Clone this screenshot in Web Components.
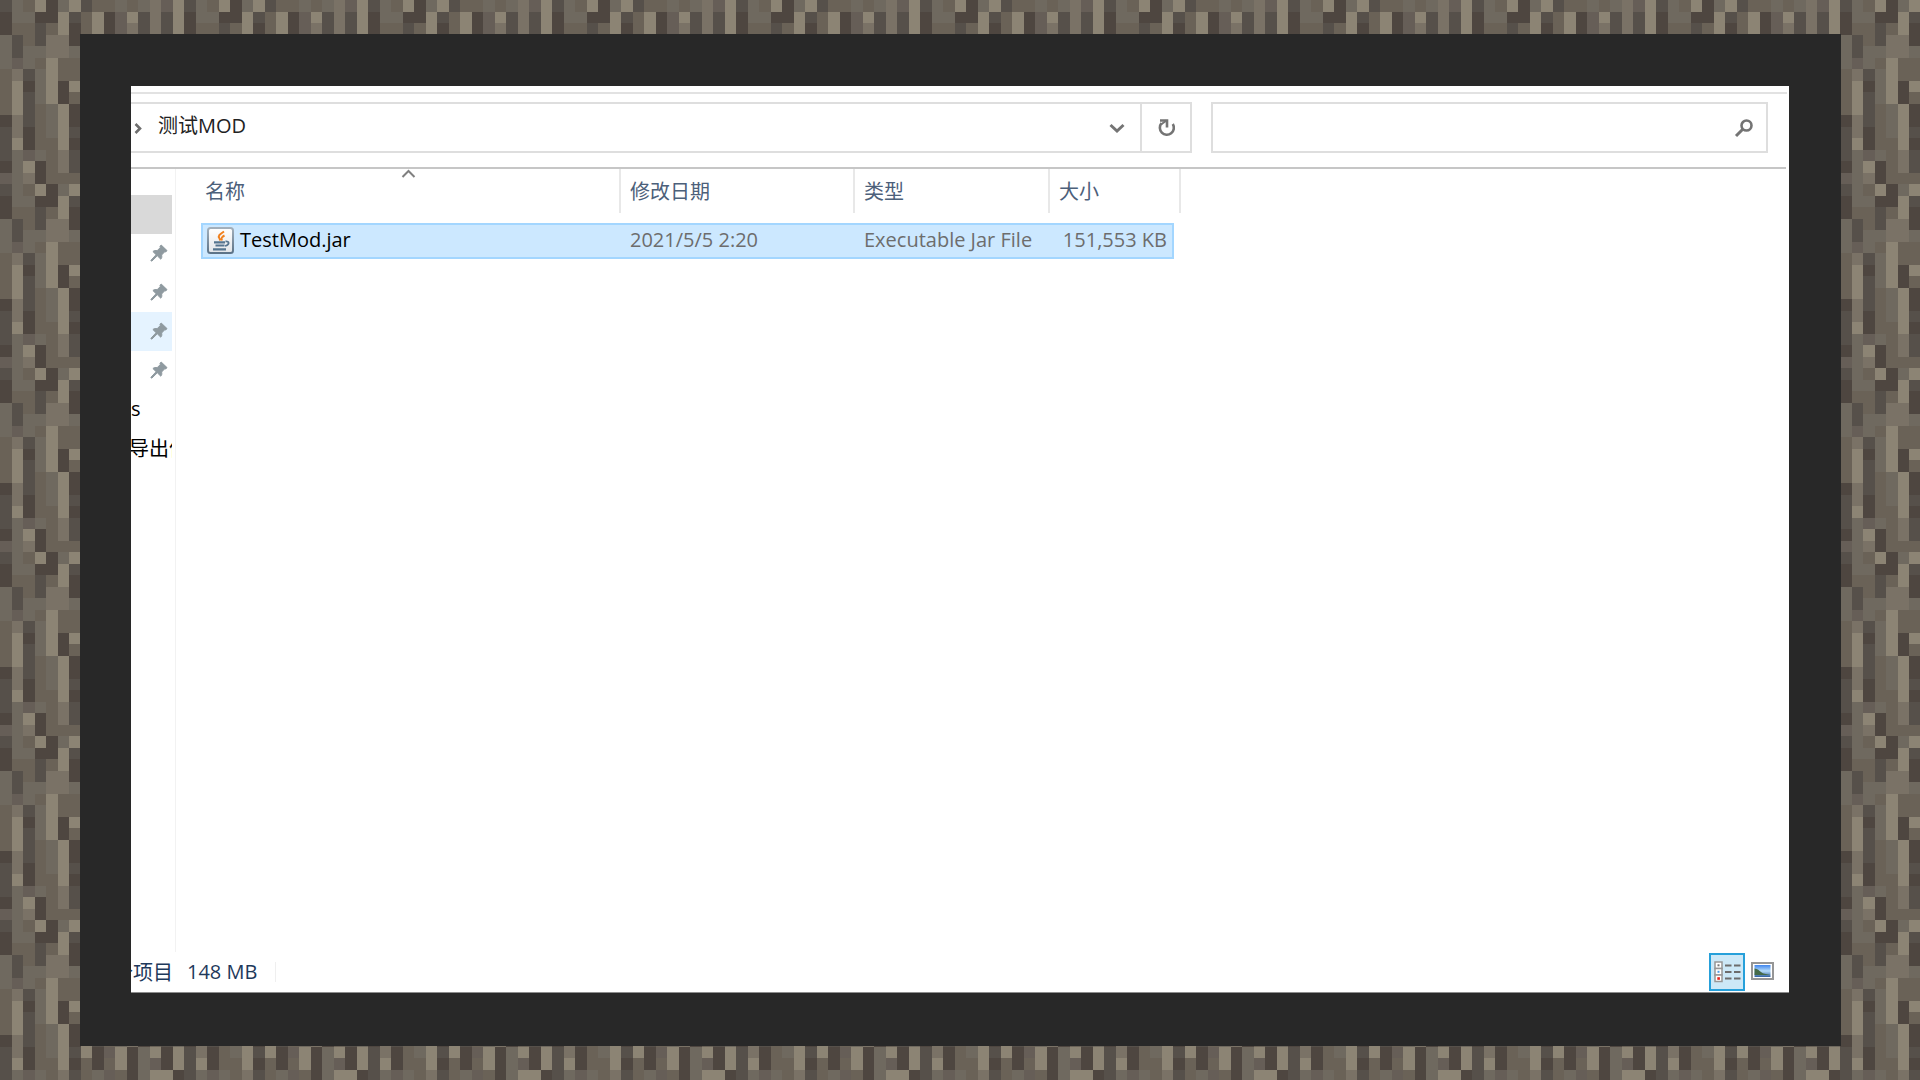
<!DOCTYPE html>
<html lang="zh-CN">
<head>
<meta charset="utf-8">
<title>测试MOD</title>
<style>
  html, body { margin: 0; height: 100%; }
  body { font-family: "Open Sans", "Noto Sans CJK SC", sans-serif; font-size: 20px; color: #111; background: #6b6357; }
</style>
</head>
<body>
<bark-backdrop>
  <explorer-window>
    <address-bar slot="bar" folder="测试MOD"></address-bar>
    <quick-access slot="side"></quick-access>
    <file-table slot="main"></file-table>
    <status-bar slot="status"></status-bar>
  </explorer-window>
</bark-backdrop>

<script>
const define = (name, html, setup) => {
  const tpl = document.createElement('template');
  tpl.innerHTML = '<style>*{box-sizing:border-box}button{font:inherit;color:inherit;background:none;border:0;padding:0;margin:0;text-align:left}svg{display:block;flex:none}</style>' + html;
  customElements.define(name, class extends HTMLElement {
    constructor() {
      super();
      this.attachShadow({ mode: 'open' }).append(tpl.content.cloneNode(true));
    }
    connectedCallback() { if (setup) setup(this, this.shadowRoot); }
  });
};

/* 16 x 16 texel bark tile, one letter for each shade */
const SHADES = { D: '#4e4640', E: '#56504a', G: '#665e57', M: '#6a6257', N: '#6f695f', L: '#7a7266', B: '#8c8474' };
const BARK = [
  'ENMBDNBEMMNMNLGB',
  'DNNDDBEMBDGBELEB',
  'DMMEMBDMBDGLELEB',
  'NEMELLDMNLDMNEMB',
  'NENNLLNMNLEMGDNL',
  'NGNMBMMNDMBELMDN',
  'MLENBMMLENMDNBMG',
  'MBDNBDBMDBNEMLDM',
  'MBENBDMNDBMDNMEL',
  'MBEMNBDLENMBDMNE',
  'DLEMNBDBEMNLDMEN',
  'ELDMNBEBDGBDNBDB',
  'EBDMMBDMDMBDNGDB',
  'ENGNMLEMNGMDNBBD',
  'DNBDMLENMBLENMLD',
  'GNLDMMMBEMNDGLEM'
];
define('bark-backdrop', `
<style>
  :host { display: block; min-height: 100vh; position: relative; }
  .bark { position: absolute; inset: 0; width: 100%; height: 100%; }
  .frame { position: relative; display: flex; min-height: 100vh; padding: 34px 79px 34px 80px; box-sizing: border-box; }
  .mat { flex: 1; display: flex; background: #282828; padding: 52px 52px 53px 51px; }
</style>
<svg class="bark" aria-hidden="true">
  <defs><pattern id="p" width="184" height="184" patternUnits="userSpaceOnUse" viewBox="0 0 16 16"></pattern></defs>
  <rect width="100%" height="100%" fill="url(#p)"/>
</svg>
<div class="frame"><div class="mat"><slot></slot></div></div>`,
(host, root) => {
  const p = root.querySelector('pattern');
  BARK.forEach((row, y) => [...row].forEach((c, x) => {
    const r = document.createElementNS('http://www.w3.org/2000/svg', 'rect');
    Object.entries({ x, y, width: 1, height: 1, fill: SHADES[c], 'shape-rendering': 'crispEdges' }).forEach(([k, v]) => r.setAttribute(k, v));
    p.append(r);
  }));
});

define('explorer-window', `
<style>
  :host { flex: 1; min-width: 0; display: flex; flex-direction: column; background: #fff; overflow: hidden; border-bottom: 1px solid #8c8c8c; }
  .ribbon { height: 8px; margin-right: 2px; border-bottom: 2px solid #e2e2e2; }
  .top { padding: 8px 0 14px; margin-right: 3px; border-bottom: 2px solid #c6c6c6; }
  .body { flex: 1; display: flex; min-height: 0; }
</style>
<div class="ribbon"></div>
<div class="top"><slot name="bar"></slot></div>
<div class="body"><slot name="side"></slot><slot name="main"></slot></div>
<slot name="status"></slot>`);

define('address-bar', `
<style>
  :host { display: flex; gap: 19px; height: 51px; padding-right: 18px; color: #222; }
  .path { width: 1061px; display: flex; align-items: center; border: 2px solid #dedede; border-left: 0; }
  .crumb { flex: 1; display: flex; align-items: center; gap: 15px; padding-left: 2px; line-height: 28px; }
  .crumb button { margin-bottom: 4px; }
  .drop { width: 46px; height: 100%; display: grid; place-items: center; }
  .refresh { width: 50px; height: 100%; display: grid; place-items: center; border-left: 2px solid #dedede; }
  .search { flex: 1; display: flex; align-items: center; border: 2px solid #dedede; padding-right: 12px; }
  input { flex: 1; min-width: 0; height: 100%; border: 0; padding: 0 10px; font: inherit; background: none; outline: 0; }
</style>
<nav class="path" aria-label="地址">
  <div class="crumb">
    <svg width="10" height="14" viewBox="0 0 10 14"><path d="M2.5 3l4.500 4.500-4.500 4.500" fill="none" stroke="#6e6e6e" stroke-width="2.600"/></svg>
    <button class="name"></button>
  </div>
  <button class="drop" aria-label="展开"><svg width="16" height="12" viewBox="0 0 16 12"><path d="M1.500 3l6.500 6 6.500-6" fill="none" stroke="#747474" stroke-width="3"/></svg></button>
  <button class="refresh" aria-label="刷新"><svg width="20" height="20" viewBox="0 0 20 20"><path d="M5.500 5.200A7 7 0 1 0 16.800 6" fill="none" stroke="#747474" stroke-width="2.600"/><path d="M4 2.500h7v7" fill="none" stroke="#747474" stroke-width="2.600"/><path d="M5 6.500l5.500-4" stroke="#747474" stroke-width="2"/></svg></button>
</nav>
<div class="search">
  <input type="text" aria-label="搜索">
  <button aria-label="开始搜索"><svg width="20" height="20" viewBox="0 0 20 20"><circle cx="12.500" cy="7.500" r="5" fill="none" stroke="#747474" stroke-width="2.600"/><path d="M9 11l-7 7" stroke="#747474" stroke-width="3"/></svg></button>
</div>`,
(host, root) => { root.querySelector('.name').textContent = host.getAttribute('folder'); });

define('pin-icon', `
<style>:host { display: block; }</style>
<svg width="18" height="18" viewBox="0 0 18 18"><path fill="#8f9aa0" stroke="#8f9aa0" stroke-width="1" d="M11.200 1L17 6.600 15.700 8l-1-.2-3.100 3.200c.5 1.800.2 3.200-.8 4.200L7.300 11.800 2 17 1 17 1 16.200 6.100 10.700 2.900 7.500c1.200-1 2.600-1.200 4.200-.8l3.200-3.100-.3-1.300z"/></svg>`);

define('quick-access', `
<style>
  :host { display: block; width: 44px; flex: none; border-right: 1px solid #f2f2f2; }
  ul { list-style: none; margin: 0; padding: 26px 3px 0 0; }
  li { height: 39px; display: flex; align-items: center; justify-content: flex-end; padding: 0 4px 2px 0; overflow: hidden; white-space: nowrap; }
  li.sel { background: #d9d9d9; }
  li.hover { background: #e5f3ff; }
  li.text { justify-content: flex-start; padding-right: 0; color: #000; }
  li.cjk { text-indent: -2px; }
</style>
<ul>
  <li class="sel"></li>
  <li><pin-icon></pin-icon></li>
  <li><pin-icon></pin-icon></li>
  <li class="hover"><pin-icon></pin-icon></li>
  <li><pin-icon></pin-icon></li>
  <li class="text">s</li>
  <li class="text cjk">导出件</li>
</ul>`);

define('jar-icon', `
<style>:host { display: block; flex: none; }</style>
<svg width="27" height="27" viewBox="0 0 27 27">
  <defs><linearGradient id="g" x1="0" y1="0" x2="0" y2="1"><stop offset="0" stop-color="#a3b0bc"/><stop offset="1" stop-color="#5c7388"/></linearGradient>
  <linearGradient id="f" x1="0" y1="0" x2="0" y2="1"><stop offset="0" stop-color="#fff"/><stop offset="1" stop-color="#e2e5e8"/></linearGradient></defs>
  <rect x="1" y="1" width="25" height="25" rx="2.500" fill="url(#f)" stroke="url(#g)" stroke-width="2"/>
  <path d="M17 4.500c-4.500 3-6.500 4.500-4.500 7l1 2M17.500 8.500c-3 1.500-3.500 2.500-2.500 5" fill="none" stroke="#f0801e" stroke-width="2"/>
  <path d="M7 15.300h11M8.500 18.500h9M6 22.300h13" stroke="#56758f" stroke-width="2.200" fill="none"/>
  <path d="M18.500 14.500c4-.5 4.500 3-.5 4.500" fill="none" stroke="#56758f" stroke-width="1.800"/>
</svg>`);

define('file-table', `
<style>
  :host { flex: 1; min-width: 0; display: block; padding-left: 25px; }
  table { display: block; width: 980px; }
  thead, tbody { display: block; }
  tr { display: grid; grid-template-columns: 420px 234px 195px 1fr; align-items: center; }
  th { height: 44px; display: flex; align-items: center; position: relative; padding: 0 0 2px 9px; font-weight: 400; color: #4c607a; border-right: 2px solid #e8e8e8; }
  th:first-child { padding-left: 4px; }
  th svg { position: absolute; left: 200px; top: 0; }
  tbody { padding: 10px 7px 0 0; }
  tbody tr { height: 36px; background: #cce8ff; box-shadow: inset 0 0 0 2px #a3d6ff; color: #6d6d6d; }
  td { padding: 0 0 2px 9px; line-height: 28px; white-space: nowrap; }
  td:first-child { display: flex; align-items: center; gap: 6px; padding-left: 6px; color: #000; }
  td:last-child { text-align: right; padding: 0 7px 2px 0; }
</style>
<table>
  <thead><tr>
    <th><button>名称</button><svg width="15" height="9" viewBox="0 0 15 9"><path d="M1.500 8l6-6 6 6" fill="none" stroke="#808080" stroke-width="2"/></svg></th>
    <th><button>修改日期</button></th><th><button>类型</button></th><th><button>大小</button></th>
  </tr></thead>
  <tbody><tr>
    <td><jar-icon></jar-icon><span>TestMod.jar</span></td>
    <td>2021/5/5 2:20</td><td>Executable Jar File</td><td>151,553 KB</td>
  </tr></tbody>
</table>`);

define('status-bar', `
<style>
  :host { display: flex; align-items: center; height: 40px; padding-right: 15px; color: #1e395b; white-space: nowrap; }
  .count { width: 42px; display: flex; justify-content: flex-end; overflow: hidden; padding-bottom: 2px; }
  .size { padding: 0 18px 0 14px; line-height: 20px; border-right: 1px solid #efefef; }
  .views { margin-left: auto; display: flex; gap: 6px; }
  .views button { height: 38px; display: grid; place-items: center; }
  .views .on { width: 36px; background: #cce8f7; border: 2px solid #26a0da; }
  .views .thumb { padding-bottom: 2px; }
</style>
<span class="count">个项目</span><span class="size">148 MB</span>
<div class="views">
  <button class="on" aria-label="详细信息"><svg width="28" height="22" viewBox="0 0 28 22">
    <g fill="#fff" stroke="#969696" stroke-width="1.500"><rect x="2" y="1" width="7" height="6.500"/><rect x="2" y="7.500" width="7" height="6.500"/><rect x="2" y="14" width="7" height="6.500"/></g>
    <path d="M12 4.500h6.500M21 4.500h6.500M12 11h6.500M21 11h6.500M12 17.500h6.500M21 17.500h6.500" stroke="#6c6c6c" stroke-width="2.200"/>
    <rect x="4.500" y="3.300" width="2" height="2" fill="#777"/><rect x="4.500" y="9.800" width="2" height="2" fill="#4c9be8"/><rect x="4.300" y="16.200" width="2.600" height="2.600" fill="#e8201a"/>
  </svg></button>
  <button class="thumb" aria-label="缩略图"><svg width="23" height="18" viewBox="0 0 23 18">
    <defs><linearGradient id="s" x1="0" y1="0" x2="0" y2="1"><stop offset="0" stop-color="#3f85ee"/><stop offset=".5" stop-color="#b5dcf8"/><stop offset="1" stop-color="#2f5f9e"/></linearGradient></defs>
    <rect x="1" y="1" width="21" height="16" fill="#fff" stroke="#969696" stroke-width="2"/>
    <rect x="3.500" y="3" width="16" height="12" fill="url(#s)"/>
    <path d="M3.500 6.500c4 0 6 4 9 5l7 1.500H3.500z" fill="#456a48"/>
  </svg></button>
</div>`);
</script>
</body>
</html>
